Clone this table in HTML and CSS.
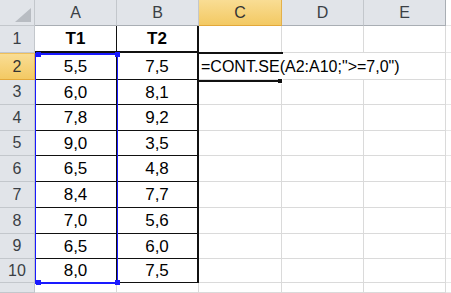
FILE: index.html
```html
<!DOCTYPE html>
<html>
<head>
<meta charset="utf-8">
<link rel="stylesheet" href="styles.css">
</head>
<body>
<div class="sheet">
  <div class="hd corner"><span class="tri"></span></div>
  <div class="hd col">A</div>
  <div class="hd col">B</div>
  <div class="hd col sel">C</div>
  <div class="hd col">D</div>
  <div class="hd col last">E</div>
  <div class="rest"></div>

  <div class="hd row">1</div>
  <div class="c d b1 bold">T1</div>
  <div class="c d b1 rb bold">T2</div>
  <div class="c"></div><div class="c"></div><div class="c"></div><div class="rest"></div>

  <div class="hd row sel">2</div>
  <div class="c d">5,5</div>
  <div class="c d rb">7,5</div>
  <div class="c active"><span class="formula">=CONT.SE(A2:A10;"&gt;=7,0")</span></div>
  <div class="c nor"></div><div class="c"></div><div class="rest"></div>

  <div class="hd row">3</div>
  <div class="c d">6,0</div><div class="c d rb">8,1</div>
  <div class="c"></div><div class="c"></div><div class="c"></div><div class="rest"></div>

  <div class="hd row">4</div>
  <div class="c d">7,8</div><div class="c d rb">9,2</div>
  <div class="c"></div><div class="c"></div><div class="c"></div><div class="rest"></div>

  <div class="hd row">5</div>
  <div class="c d">9,0</div><div class="c d rb">3,5</div>
  <div class="c"></div><div class="c"></div><div class="c"></div><div class="rest"></div>

  <div class="hd row">6</div>
  <div class="c d">6,5</div><div class="c d rb">4,8</div>
  <div class="c"></div><div class="c"></div><div class="c"></div><div class="rest"></div>

  <div class="hd row">7</div>
  <div class="c d">8,4</div><div class="c d rb">7,7</div>
  <div class="c"></div><div class="c"></div><div class="c"></div><div class="rest"></div>

  <div class="hd row">8</div>
  <div class="c d">7,0</div><div class="c d rb">5,6</div>
  <div class="c"></div><div class="c"></div><div class="c"></div><div class="rest"></div>

  <div class="hd row">9</div>
  <div class="c d">6,5</div><div class="c d rb">6,0</div>
  <div class="c"></div><div class="c"></div><div class="c"></div><div class="rest"></div>

  <div class="hd row">10</div>
  <div class="c d">8,0</div><div class="c d rb">7,5</div>
  <div class="c"></div><div class="c"></div><div class="c"></div><div class="rest"></div>

  <div class="hd row"></div>
  <div class="c"></div><div class="c"></div>
  <div class="c"></div><div class="c"></div><div class="c"></div><div class="rest"></div>

  <div class="range">
    <span class="h h-tl"></span><span class="h h-tr"></span>
    <span class="h h-bl"></span><span class="h h-br"></span>
  </div>
  <div class="cursor"><span class="fill"></span></div>
</div>
</body>
</html>
```
FILE: styles.css
```css
* { box-sizing: border-box; }
html, body { margin: 0; padding: 0; background: #fff; }
body { width: 451px; height: 293px; overflow: hidden; font-family: "Liberation Sans", Arial, sans-serif; }

.sheet {
  position: relative;
  display: grid;
  grid-template-columns: 35px 82px 82px 83px 82px 82px 1fr;
  grid-template-rows: 26px 27px 27px 25px 26px 25px 26px 26px 26px 25px 24px 1fr;
  height: 293px;
}

.hd {
  background: #e1e4e9;
  border-right: 1px solid #c3c7cc;
  border-bottom: 1px solid #c3c7cc;
  color: #3a3f45;
  display: flex;
  align-items: center;
  justify-content: center;
}
.hd.col { font-size: 16px; border-bottom-color: #a9aeb4; padding-top: 1px; }
.hd.row { font-size: 16px; }
.hd.last { border-right-color: #a9aeb4; }
.hd.sel {
  background: linear-gradient(#f9dd94, #f3c963);
  border-right-color: #e3b04a;
  border-bottom-color: #e3a83a;
  color: #333;
}
.hd.row.sel { border-top: 1px solid #f0c05a; }
.corner { position: relative; }
.tri {
  position: absolute;
  right: 3px;
  bottom: 3px;
  width: 0; height: 0;
  border-left: 16px solid transparent;
  border-bottom: 14px solid #b8bcc2;
}

.c {
  border-right: 1px solid #dadada;
  border-bottom: 1px solid #dadada;
  display: flex;
  align-items: center;
  justify-content: center;
  font-size: 17px;
  color: #000;
  padding-top: 1px;
}
.c.d {
  border-right: 1px solid #111;
  border-bottom: 1px solid #111;
}
.c.d.b1 { border-bottom-width: 2px; }
.c.d.rb { border-right-width: 2px; }
.bold { font-weight: bold; }

.c.active {
  border-right: none;
  justify-content: flex-start;
  overflow: visible;
  white-space: nowrap;
  padding-left: 2px;
  position: relative;
  z-index: 1;
}
.formula { font-size: 16px; color: #000; }
.c.nor { border-right: none; }

.rest { border-bottom: 1px solid #e6e6e6; }

.range {
  position: absolute;
  left: 35px;
  top: 53px;
  width: 83px;
  height: 231px;
  border: 1px solid #1a1aff;
  border-top-width: 2px;
  border-bottom-width: 2px;
  z-index: 2;
}
.h {
  position: absolute;
  width: 5px;
  height: 5px;
  background: #1a1aff;
}
.h-tl { left: 0; top: -3px; }
.h-tr { right: -3px; top: -3px; }
.h-bl { left: 0; bottom: -3px; }
.h-br { right: -3px; bottom: -3px; }

.cursor {
  position: absolute;
  left: 198px;
  top: 52px;
  width: 85px;
  height: 30px;
  border-top: 2px solid #111;
  border-bottom: 2px solid #111;
  z-index: 2;
}
.fill {
  position: absolute;
  right: 0;
  bottom: -4px;
  width: 5px;
  height: 5px;
  background: #111;
  border: 1px solid #fff;
  border-top: none;
  border-left: none;
}
```
